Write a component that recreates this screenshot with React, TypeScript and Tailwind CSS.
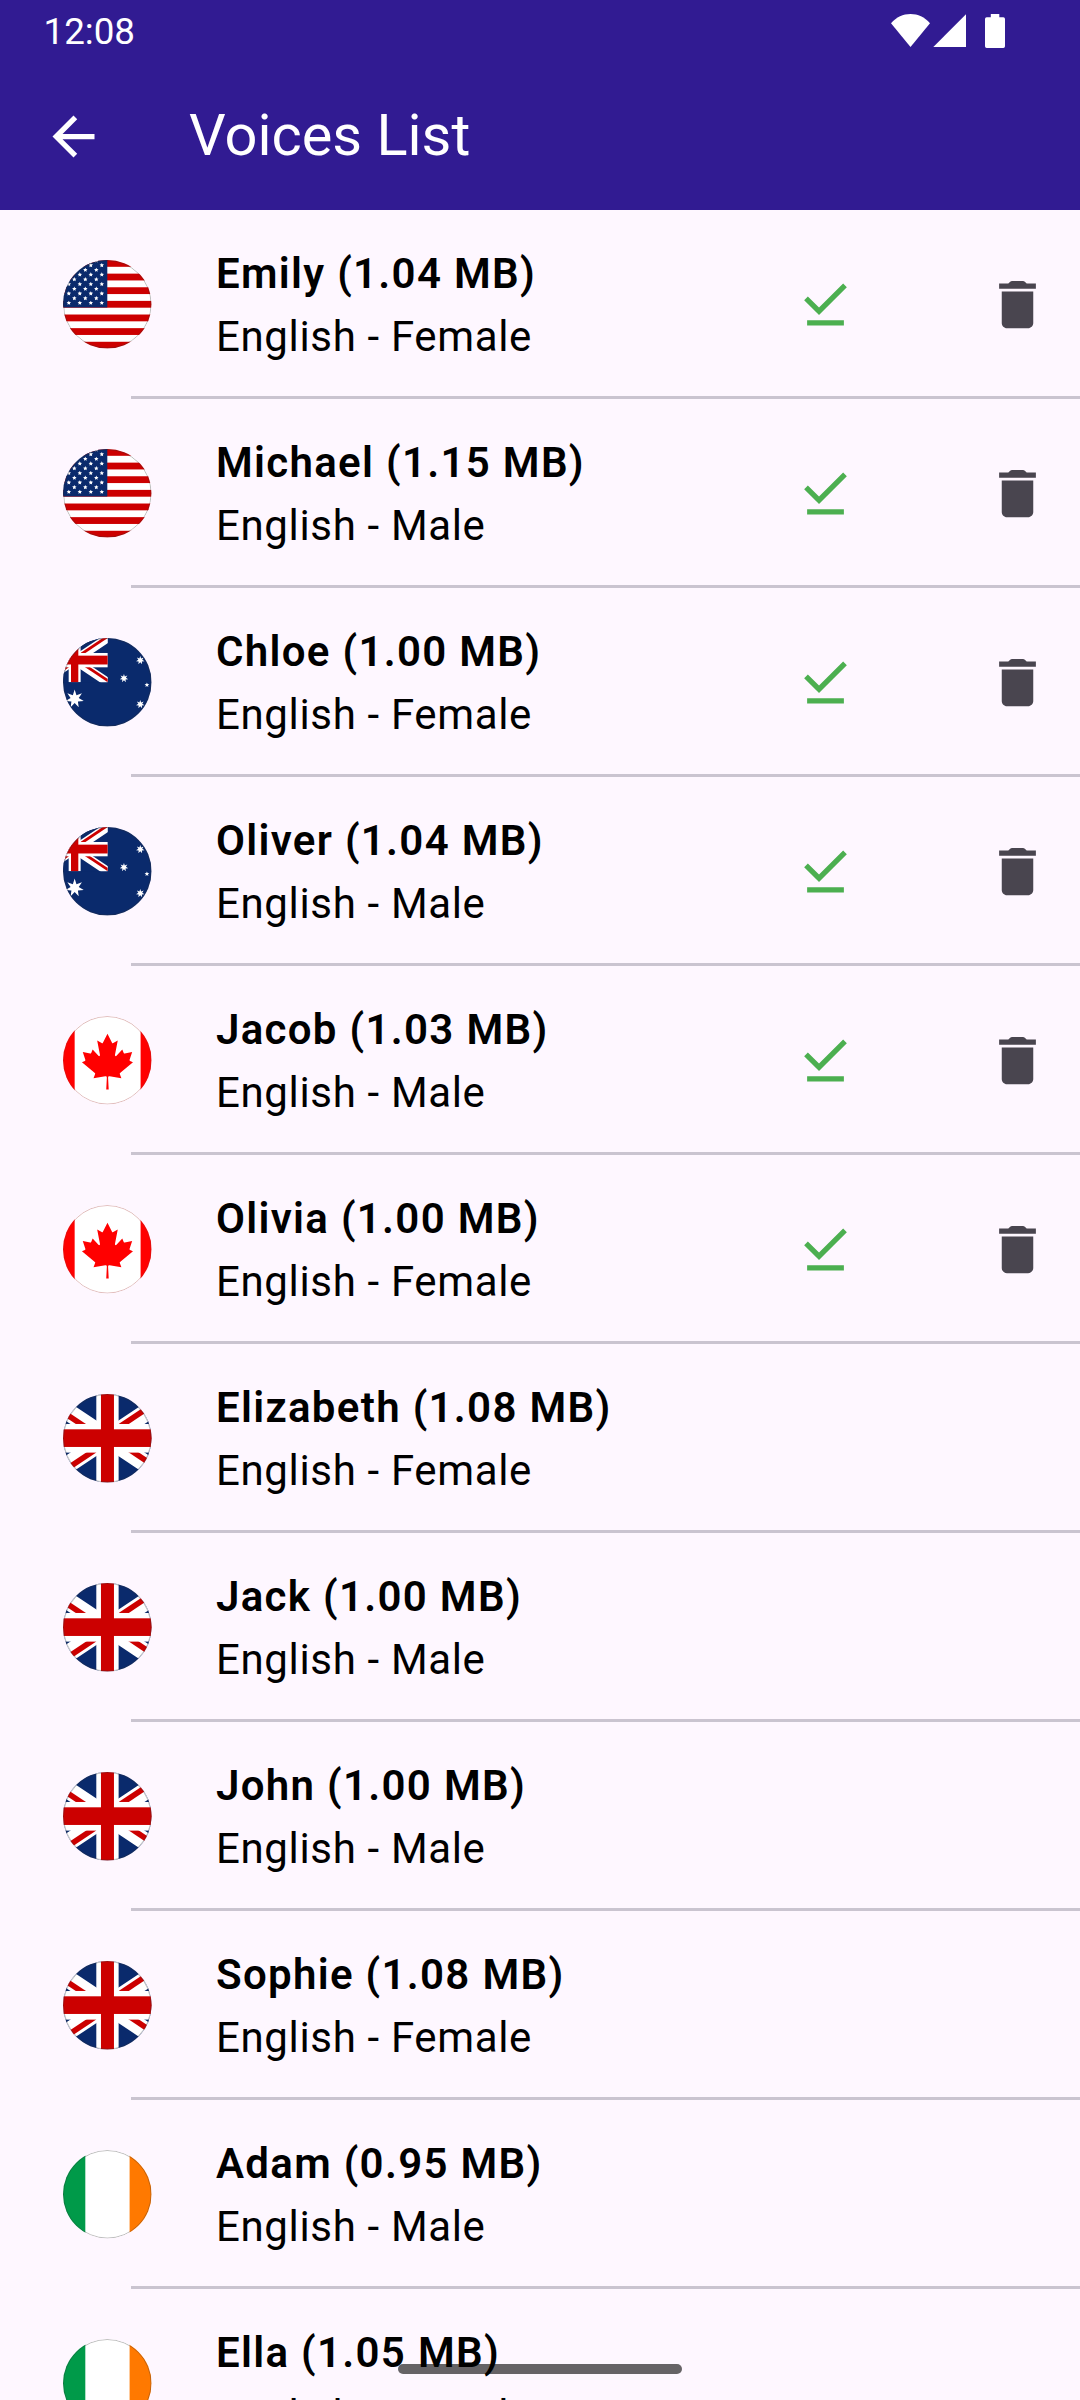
import React, { useId } from "react";

type Country = "us" | "au" | "ca" | "gb" | "ie";

interface Voice {
  name: string;
  size: string;
  gender: "Female" | "Male";
  country: Country;
  downloaded?: boolean;
}

const voices: Voice[] = [
  { name: "Emily", size: "1.04", gender: "Female", country: "us", downloaded: true },
  { name: "Michael", size: "1.15", gender: "Male", country: "us", downloaded: true },
  { name: "Chloe", size: "1.00", gender: "Female", country: "au", downloaded: true },
  { name: "Oliver", size: "1.04", gender: "Male", country: "au", downloaded: true },
  { name: "Jacob", size: "1.03", gender: "Male", country: "ca", downloaded: true },
  { name: "Olivia", size: "1.00", gender: "Female", country: "ca", downloaded: true },
  { name: "Elizabeth", size: "1.08", gender: "Female", country: "gb" },
  { name: "Jack", size: "1.00", gender: "Male", country: "gb" },
  { name: "John", size: "1.00", gender: "Male", country: "gb" },
  { name: "Sophie", size: "1.08", gender: "Female", country: "gb" },
  { name: "Adam", size: "0.95", gender: "Male", country: "ie" },
  { name: "Ella", size: "1.05", gender: "Female", country: "ie" },
];

function starPoints(cx: number, cy: number, outer: number, inner: number, tips: number) {
  const pts: string[] = [];
  for (let i = 0; i < tips * 2; i++) {
    const r = i % 2 === 0 ? outer : inner;
    const a = (Math.PI * i) / tips - Math.PI / 2;
    pts.push(`${(cx + r * Math.cos(a)).toFixed(2)},${(cy + r * Math.sin(a)).toFixed(2)}`);
  }
  return pts.join(" ");
}

// Union Jack on a 399 x 266 field.
function UnionJack({ bar = 39 }: { bar?: number }) {
  const edge = bar + 28;
  return (
    <g>
      <rect width="399" height="266" fill="#0a2a6c" />
      <path d="M0 0L399 266M399 0L0 266" stroke="#fff" strokeWidth="52" />
      <g fill="#cc0000">
        <path d="M0 0L199.5 133H169L0 20.4Z" />
        <path d="M399 0L199.5 133H169L368.5 0Z" />
        <path d="M399 266L199.5 133H230L399 245.6Z" />
        <path d="M0 266L199.5 133H230L30.5 266Z" />
      </g>
      <rect x={199.5 - edge / 2} width={edge} height="266" fill="#fff" />
      <rect y="90" width="399" height="86" fill="#fff" />
      <rect x={199.5 - bar / 2} width={bar} height="266" fill="#cc0000" />
      <rect y="106" width="399" height="53" fill="#cc0000" />
    </g>
  );
}

function UsFlag() {
  const stars: [number, number][] = [];
  for (let j = 0; j < 10; j++)
    for (let i = 0; i < 7; i++) if ((i + j) % 2 === 0) stars.push([116.5 - 16.5 * i, 129 - 14.15 * j]);
  return (
    <g>
      <rect width="266" height="266" fill="#fff" />
      {[0, 1, 2, 3, 4, 5, 6].map((n) => (
        <rect key={n} y={n * 40.92} width="266" height="20.46" fill="#cc0000" />
      ))}
      <rect width="133" height="142.5" fill="#0a2a6c" />
      {stars.map(([x, y]) => (
        <polygon key={`${x}-${y}`} points={starPoints(x, y, 7, 3.4, 5)} fill="#fff" />
      ))}
    </g>
  );
}

function AuFlag() {
  return (
    <g>
      <rect width="266" height="266" fill="#0a2a6c" />
      <svg x="-64.500" y="0" width="199" height="133" viewBox="0 0 399 266" preserveAspectRatio="none">
        <UnionJack bar={44} />
      </svg>
      <g fill="#fff">
        <polygon points={starPoints(35, 183, 28, 12.5, 7)} />
        <polygon points={starPoints(232, 67, 13, 6, 7)} />
        <polygon points={starPoints(183, 121, 13, 6, 7)} />
        <polygon points={starPoints(232, 199, 13, 6, 7)} />
        <polygon points={starPoints(252, 141, 7.5, 3.3, 5)} />
      </g>
    </g>
  );
}

function CaFlag() {
  return (
    <g>
      <rect width="266" height="266" fill="#fff" />
      <path d="M0 0h35v266H0zM233 0h33v266h-33z" fill="#ff0000" />
      <path
        transform="translate(133.5 137) scale(.0412 .0417) translate(-4800 -2415)"
        fill="#ff0000"
        d="m4890 4430-45-863a95 95 0 0 1 111-98l859 151-116-320a65 65 0 0 1 20-73l941-762-212-99a65 65 0 0 1-34-79l186-572-542 115a65 65 0 0 1-73-38l-105-247-423 454a65 65 0 0 1-111-57l204-1052-327 189a65 65 0 0 1-91-27l-332-652-332 652a65 65 0 0 1-91 27l-327-189 204 1052a65 65 0 0 1-111 57l-423-454-105 247a65 65 0 0 1-73 38l-542-115 186 572a65 65 0 0 1-34 79l-212 99 941 762a65 65 0 0 1 20 73l-116 320 859-151a95 95 0 0 1 111 98l-45 863z"
      />
    </g>
  );
}

function IeFlag() {
  return (
    <g>
      <rect width="266" height="266" fill="#fff" />
      <path d="M0 0h67v266H0z" fill="#009a49" />
      <path d="M200 0h66v266h-66z" fill="#ff7900" />
    </g>
  );
}

function Flag({ country }: { country: Country }) {
  const id = useId();
  return (
    <svg viewBox="0 0 266 266" className="h-[88.6px] w-[88.6px] shrink-0">
      <defs>
        <clipPath id={id}>
          <circle cx="133" cy="133" r="133" />
        </clipPath>
      </defs>
      <g clipPath={`url(#${id})`}>
        {country === "us" && <UsFlag />}
        {country === "au" && <AuFlag />}
        {country === "ca" && <CaFlag />}
        {country === "gb" && (
          <g transform="translate(-66 0)">
            <UnionJack />
          </g>
        )}
        {country === "ie" && <IeFlag />}
        <circle
          cx="133"
          cy="133"
          r="131.5"
          fill="none"
          stroke={country === "ca" ? "#a03030" : "#333"}
          strokeOpacity=".32"
          strokeWidth="3"
        />
      </g>
    </svg>
  );
}

function DownloadDoneIcon() {
  return (
    <svg viewBox="0 0 24 24" className="h-[63px] w-[63px] fill-[#4caf50]">
      <path d="M20.13 5.41 18.72 4l-9.19 9.19-4.25-4.25-1.41 1.41 5.66 5.66zM5 18h14v2H5z" />
    </svg>
  );
}

function DeleteIcon() {
  return (
    <svg viewBox="0 0 24 24" className="h-[63px] w-[63px] fill-[#49454f]">
      <path d="M6 19c0 1.1.9 2 2 2h8c1.1 0 2-.9 2-2V7H6v12zM19 4h-3.500l-.71-.71c-.18-.18-.44-.29-.7-.29H9.910c-.26 0-.52.11-.7.29L8.500 4H5v2h14V4z" />
    </svg>
  );
}

function VoiceRow({ voice }: { voice: Voice }) {
  return (
    <li className="h-[189px]">
      <div className="flex h-[186px] items-center pt-[3px] pr-[31px] pl-[63px]">
        <Flag country={voice.country} />
        <div className="ml-[64.4px] flex-1 text-[42px] leading-[63px] whitespace-nowrap text-black">
          <div className="font-semibold tracking-[1.3125px]">{`${voice.name} (${voice.size} MB)`}</div>
          <div className="tracking-[0.65625px]">{`English - ${voice.gender}`}</div>
        </div>
        {voice.downloaded && (
          <div className="flex gap-[129px]">
            <DownloadDoneIcon />
            <DeleteIcon />
          </div>
        )}
      </div>
      <div className="ml-[131px] h-[3px] bg-[#cac4d0]" />
    </li>
  );
}

function StatusBar() {
  return (
    <div className="flex h-[63px] justify-between pr-[75px] pl-[43.5px]">
      <span className="pt-[10px] text-[36.75px] leading-[43px]">12:08</span>
      <div className="flex pt-[14px]">
        <svg viewBox="0 0 39 33" className="h-[33px] w-[39px] fill-white">
          <path d="M19.5 33L0 9.2C5.5 3 12 0 19.500 0S33.500 3 39 9.200Z" />
        </svg>
        <svg viewBox="0 0 33 33" className="ml-[3px] h-[33px] w-[33px] fill-white">
          <path d="M.3 33H33V.3Z" />
        </svg>
        <svg viewBox="0 0 20 34" className="ml-[19px] h-[34px] w-[20px] fill-white">
          <path d="M5.800 0h8.500v3.300h4q1.700 0 1.700 1.700v27.300q0 1.700-1.700 1.700H1.700Q0 34 0 32.300V5q0-1.700 1.700-1.700h4.100Z" />
        </svg>
      </div>
    </div>
  );
}

export default function App() {
  return (
    <div className="relative h-[2400px] w-[1080px] overflow-hidden bg-[#fef7ff] font-['Roboto',sans-serif]">
      <header className="h-[210px] bg-[#311b92] text-white">
        <StatusBar />
        <div className="flex h-[147px] items-center pl-[42px]">
          <svg viewBox="0 0 24 24" className="h-[63px] w-[63px] fill-white">
            <path d="M20 11H7.83l5.590-5.590L12 4l-8 8 8 8 1.410-1.410L7.830 13H20v-2z" />
          </svg>
          <h1 className="ml-[84px] pb-[3px] text-[57.75px] leading-[72px]">Voices List</h1>
        </div>
      </header>
      <ul>
        {voices.map((v) => (
          <VoiceRow key={v.name} voice={v} />
        ))}
      </ul>
      <div className="absolute top-[2364px] left-[398px] h-[10px] w-[284px] rounded-full bg-black/60" />
    </div>
  );
}
